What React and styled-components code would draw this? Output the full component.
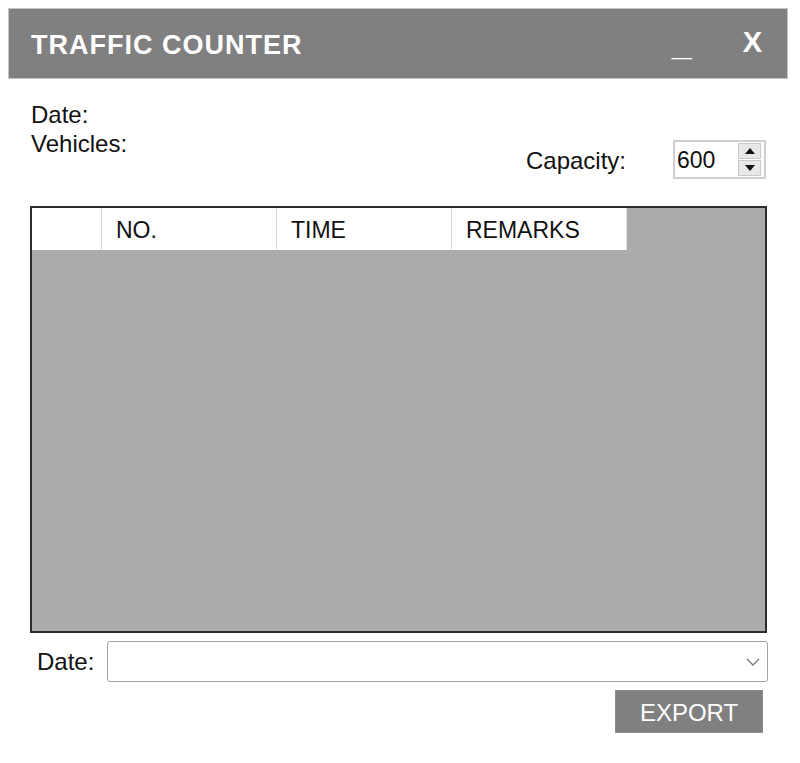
import React from "react";
import styled, { createGlobalStyle } from "styled-components";

const Global = createGlobalStyle`
  html, body { margin: 0; padding: 0; background: #ffffff; }
  body { font-family: "Liberation Sans", Arial, sans-serif; color: #111; }
`;

const Window = styled.div`
  width: 780px;
  margin: 8px;
  display: flex;
  flex-direction: column;
`;

const TitleBar = styled.div`
  height: 71px;
  box-sizing: border-box;
  background: #808080;
  border: 1px solid #c4c4c4;
  display: flex;
  align-items: center;
  padding: 0 25px 0 22px;
  color: #fff;
`;

const Title = styled.div`
  flex: 1;
  font-size: 27px;
  font-weight: bold;
  letter-spacing: 1px;
  padding-top: 4px;
`;

const TitleButton = styled.div`
  font-weight: bold;
  font-size: ${(p) => p.$size}px;
  line-height: 1;
  margin-left: ${(p) => p.$gap}px;
  transform: translateY(${(p) => p.$dy}px);
`;

const Body = styled.div`
  padding: 0 21px 0 22px;
  display: flex;
  flex-direction: column;
`;

const InfoRow = styled.div`
  height: 127px;
  display: flex;
  justify-content: space-between;
  align-items: flex-start;
`;

const InfoLabels = styled.div`
  padding: 21px 0 0 1px;
  display: flex;
  flex-direction: column;
  font-size: 24px;
  line-height: 29px;
`;

const CapacityGroup = styled.div`
  margin-top: 61px;
  margin-right: 1px;
  display: flex;
  align-items: center;
  gap: 47px;
`;

const Label = styled.span`
  font-size: 24px;
  padding-top: ${(p) => p.$pt || 0}px;
`;

const NumBox = styled.div`
  width: 93px;
  height: 39px;
  box-sizing: border-box;
  border: 2px solid #cfcfcf;
  display: flex;
  align-items: center;
  padding: 0 3px 0 2px;
`;

const NumValue = styled.span`
  flex: 1;
  font-size: 23px;
  padding-top: 2px;
`;

const Spinner = styled.div`
  display: flex;
  flex-direction: column;
  gap: 1px;
`;

const SpinBtn = styled.div`
  width: 23px;
  height: 16px;
  box-sizing: border-box;
  background: #e8e8e8;
  border: 1px solid #c8c8c8;
  display: flex;
  align-items: center;
  justify-content: center;
`;

const Grid = styled.div`
  height: 427px;
  box-sizing: border-box;
  border: 2px solid #2c2c2c;
  background: #ababab;
`;

const HeaderRow = styled.div`
  display: flex;
  height: 42px;
`;

const HeaderCell = styled.div`
  width: ${(p) => p.$w}px;
  box-sizing: border-box;
  background: #fff;
  border-right: 1px solid ${(p) => (p.$last ? "#e4e4e4" : "#d6d6d6")};
  display: flex;
  align-items: center;
  padding: 2px 0 0 14px;
  font-size: 23px;
`;

const FilterRow = styled.div`
  margin-top: 8px;
  display: flex;
  align-items: center;
`;

const FilterLabel = styled.span`
  width: 77px;
  padding-left: 7px;
  box-sizing: border-box;
  font-size: 24px;
`;

const Combo = styled.div`
  flex: 1;
  height: 41px;
  box-sizing: border-box;
  border: 1px solid #a4a4a4;
  border-radius: 3px;
  margin-right: -1px;
  display: flex;
  align-items: center;
  justify-content: flex-end;
  padding-right: 7px;
`;

const Actions = styled.div`
  margin-top: 8px;
  display: flex;
  justify-content: flex-end;
  padding-right: 4px;
`;

const ExportButton = styled.button`
  width: 148px;
  height: 43px;
  background: #808080;
  border: 1px solid #8c8c8c;
  color: #fff;
  font-family: "Liberation Sans", Arial, sans-serif;
  font-size: 24px;
  padding: 2px 0 0;
  cursor: pointer;
`;

const Arrow = ({ up }) => (
  <svg width="10" height="6" viewBox="0 0 10 6">
    <polygon points={up ? "5,0 10,6 0,6" : "0,0 10,0 5,6"} fill="#111" />
  </svg>
);

export default function App() {
  return (
    <>
      <Global />
      <Window>
        <TitleBar>
          <Title>TRAFFIC COUNTER</Title>
          <TitleButton $size={36} $gap={0} $dy={-1}>_</TitleButton>
          <TitleButton $size={29} $gap={51} $dy={-1}>X</TitleButton>
        </TitleBar>
        <Body>
          <InfoRow>
            <InfoLabels>
              <span>Date:</span>
              <span>Vehicles:</span>
            </InfoLabels>
            <CapacityGroup>
              <Label $pt={2}>Capacity:</Label>
              <NumBox>
                <NumValue>600</NumValue>
                <Spinner>
                  <SpinBtn><Arrow up /></SpinBtn>
                  <SpinBtn><Arrow /></SpinBtn>
                </Spinner>
              </NumBox>
            </CapacityGroup>
          </InfoRow>
          <Grid>
            <HeaderRow>
              <HeaderCell $w={70} />
              <HeaderCell $w={175}>NO.</HeaderCell>
              <HeaderCell $w={175}>TIME</HeaderCell>
              <HeaderCell $w={175} $last>REMARKS</HeaderCell>
            </HeaderRow>
          </Grid>
          <FilterRow>
            <FilterLabel>Date:</FilterLabel>
            <Combo>
              <svg width="14" height="8" viewBox="0 0 14 8">
                <polyline points="1,1 7,7 13,1" fill="none" stroke="#777" strokeWidth="1.3" />
              </svg>
            </Combo>
          </FilterRow>
          <Actions>
            <ExportButton>EXPORT</ExportButton>
          </Actions>
        </Body>
      </Window>
    </>
  );
}
